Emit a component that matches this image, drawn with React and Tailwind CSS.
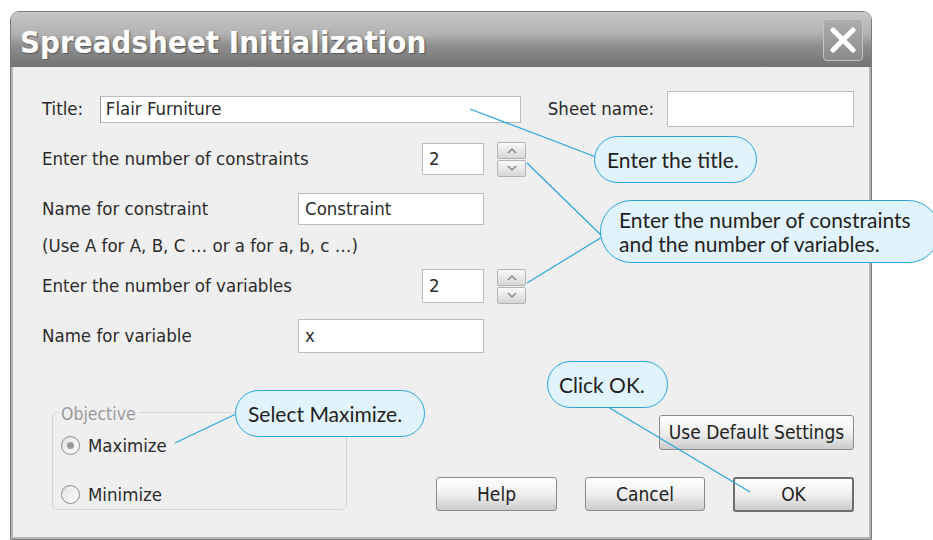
import React from "react";

const dlgFont = "font-['DejaVu_Sans_Condensed','DejaVu_Sans',sans-serif]";
const calloutFont = "font-['Lato','Open_Sans',sans-serif]";

function Input({ className = "", children }) {
  return (
    <div className={`bg-white border border-[#bdbdbd] flex items-center text-[18.5px] text-[#2b2b2b] ${className}`}>
      {children}
    </div>
  );
}

function Spinner() {
  return (
    <div className="ml-[13px] w-[29px] h-[35px] flex flex-col gap-[1px]">
      <div className="flex-1 rounded-[2px] border border-[#b3b3b3] bg-gradient-to-b from-[#fafafa] to-[#d6d6d6] flex items-center justify-center">
        <svg width="12" height="7" viewBox="0 0 12 7"><path d="M1 6 L6 1 L11 6 L9 6 L6 3 L3 6 Z" fill="#868686" /></svg>
      </div>
      <div className="flex-1 rounded-[2px] border border-[#b3b3b3] bg-gradient-to-b from-[#fafafa] to-[#d6d6d6] flex items-center justify-center">
        <svg width="12" height="7" viewBox="0 0 12 7"><path d="M1 1 L6 6 L11 1 L9 1 L6 4 L3 1 Z" fill="#868686" /></svg>
      </div>
    </div>
  );
}

function Button({ className = "", children, def = false }) {
  return (
    <div
      className={`flex items-center justify-center rounded-[3px] text-[19px] text-[#222] bg-gradient-to-b from-[#ffffff] via-[#f0f0f0] to-[#cbcbcb] ${
        def ? "border-2 border-[#6f6f6f]" : "border border-[#8a8a8a]"
      } ${className}`}
    >
      {children}
    </div>
  );
}

function Radio({ checked }) {
  return (
    <div className="w-[19px] h-[19px] rounded-full border border-[#8c8c8c] bg-gradient-to-br from-[#e2e2e2] to-[#ffffff] flex items-center justify-center">
      {checked && <div className="w-[7px] h-[7px] rounded-full bg-[#9a9a9a]" />}
    </div>
  );
}

function Callout({ className = "", children }) {
  return (
    <div
      className={`absolute rounded-full border-[1.5px] border-[#2aa6de] bg-[#e1f3fc] text-[#231f20] text-[21px] leading-[24px] flex items-center ${calloutFont} ${className}`}
    >
      {children}
    </div>
  );
}

export default function App() {
  return (
    <div className="relative w-[933px] h-[540px] bg-white overflow-hidden">
      <div className="pt-[11px] pl-[10px]">
        <div className={`w-[862px] h-[529px] flex flex-col rounded-t-[9px] border border-[#7c7c7c] overflow-hidden ${dlgFont}`}>
          {/* Title bar */}
          <div className="h-[55px] shrink-0 flex items-center justify-between pl-[9px] pr-[8px] bg-[linear-gradient(180deg,#c6c6c6_0%,#b2b2b2_40%,#8f8f8f_60%,#737373_100%)]">
            <div className="pt-[6px] text-white font-bold text-[31px] [text-shadow:1px_1px_1px_#555]">
              Spreadsheet Initialization
            </div>
            <div className="w-[40px] h-[42px] rounded-[4px] border border-[#c4c4c4] bg-[linear-gradient(180deg,#adadad_0%,#9c9c9c_50%,#8a8a8a_100%)] flex items-center justify-center">
              <svg width="26" height="26" viewBox="0 0 26 26">
                <path d="M3 3 L23 23 M23 3 L3 23" stroke="white" strokeWidth="5" strokeLinecap="round" />
              </svg>
            </div>
          </div>
          {/* Body */}
          <div className="flex-1 bg-[#efefef] border-x-2 border-b-2 border-[#b3b3b3] pt-[24px] pl-[29px] pr-[15px] text-[18.5px] text-[#2b2b2b] flex flex-col">
            <div className="h-[36px] flex items-center">
              <div className="w-[58px]">Title:</div>
              <Input className="w-[422px] h-[27px] pl-[5px] border-l-[#9c9c9c]">Flair Furniture</Input>
              <div className="ml-[27px] w-[120px]">Sheet name:</div>
              <Input className="w-[187px] h-[36px]" />
            </div>
            <div className="mt-[14px] h-[36px] flex items-center">
              <div className="w-[380px]">Enter the number of constraints</div>
              <Input className="w-[62px] h-[32px] pl-[6px]">2</Input>
              <Spinner />
            </div>
            <div className="mt-[14px] h-[36px] flex items-center">
              <div className="w-[256px]">Name for constraint</div>
              <Input className="w-[186px] h-[32px] pl-[6px]">Constraint</Input>
            </div>
            <div className="mt-[6px] h-[26px] flex items-center">
              (Use A for A, B, C … or a for a, b, c …)
            </div>
            <div className="mt-[9px] h-[36px] flex items-center">
              <div className="w-[380px]">Enter the number of variables</div>
              <Input className="w-[62px] h-[34px] pl-[6px]">2</Input>
              <Spinner />
            </div>
            <div className="mt-[14px] h-[36px] flex items-center">
              <div className="w-[256px]">Name for variable</div>
              <Input className="w-[186px] h-[34px] pl-[6px]">x</Input>
            </div>
            {/* Bottom */}
            <div className="mt-[58px] flex items-start">
              <div className="ml-[10px] relative w-[295px] h-[98px] rounded-[5px] border border-[#d6d6d6]">
                <div className="absolute left-[6px] top-[-12px] px-[2px] bg-[#efefef] text-[#9a9a9a] text-[17.5px]">Objective</div>
                <div className="absolute left-[8px] top-[19px] flex items-center gap-[8px]">
                  <Radio checked />
                  <span>Maximize</span>
                </div>
                <div className="absolute left-[8px] top-[68px] flex items-center gap-[8px]">
                  <Radio />
                  <span>Minimize</span>
                </div>
              </div>
              <div className="ml-auto flex flex-col items-end">
                <Button className="mt-[3px] w-[195px] h-[35px]">Use Default Settings</Button>
                <div className="mt-[27px] flex gap-[28px]">
                  <Button className="w-[121px] h-[34px]">Help</Button>
                  <Button className="w-[120px] h-[34px]">Cancel</Button>
                  <Button def className="w-[121px] h-[35px]">OK</Button>
                </div>
              </div>
            </div>
          </div>
        </div>
      </div>

      {/* Leader lines */}
      <svg className="absolute inset-0 pointer-events-none" width="933" height="540" viewBox="0 0 933 540">
        <g stroke="#2aa6de" strokeWidth="1.2" fill="none">
          <line x1="470" y1="109" x2="596" y2="157" />
          <line x1="527" y1="163" x2="602" y2="236" />
          <line x1="527" y1="283" x2="602" y2="237" />
          <line x1="175" y1="443" x2="238" y2="413" />
          <line x1="608" y1="407" x2="750" y2="492" />
        </g>
      </svg>

      <Callout className="left-[594px] top-[136px] w-[163px] h-[47px] pl-[12px]">Enter the title.</Callout>
      <Callout className="left-[600px] top-[200px] w-[340px] h-[63px] pl-[18px]">
        <div>
          Enter the number of constraints
          <br />
          and the number of variables.
        </div>
      </Callout>
      <Callout className="left-[235px] top-[390px] w-[190px] h-[47px] pl-[12px]">Select Maximize.</Callout>
      <Callout className="left-[547px] top-[361px] w-[121px] h-[47px] pl-[11px]">Click OK.</Callout>
    </div>
  );
}
